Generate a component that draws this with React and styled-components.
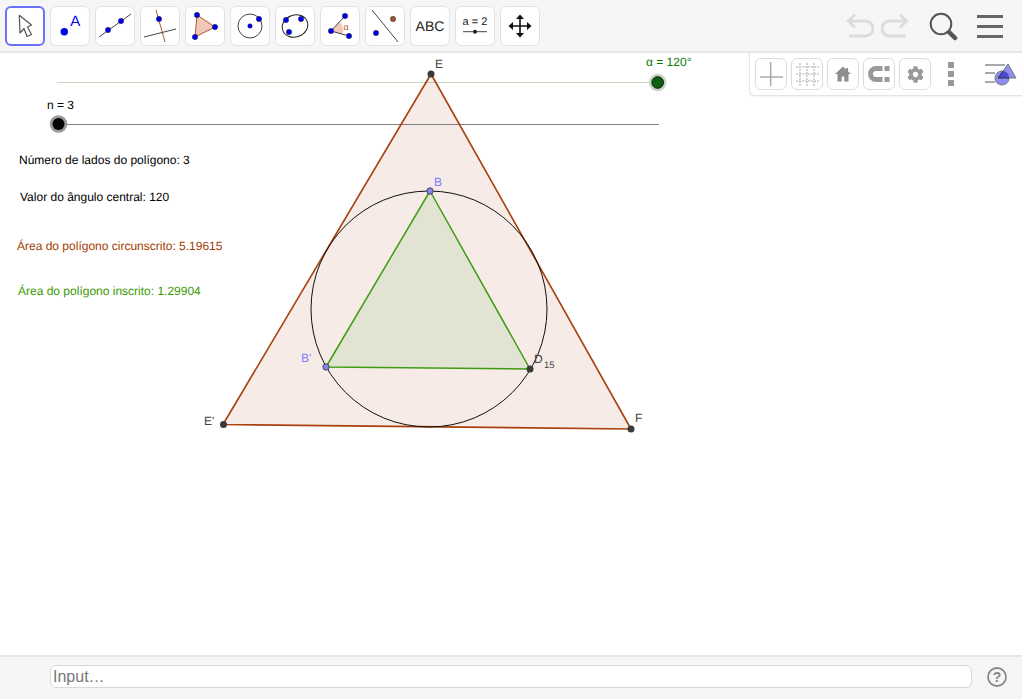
import React from "react";
import styled, { createGlobalStyle } from "styled-components";
import { FaCog } from "react-icons/fa";

const Global = createGlobalStyle`
  html, body { margin: 0; padding: 0; background: #fff; }
  body { font-family: "Liberation Sans", Arial, sans-serif; }
`;

const Page = styled.div`
  width: 1022px; height: 699px; display: flex; flex-direction: column; background: #fff;
`;
const Toolbar = styled.header`
  height: 53px; box-sizing: border-box; flex: none; background: #f6f6f6; border-bottom: 2px solid #e6e6e6;
  display: flex; align-items: flex-start; justify-content: space-between; padding: 6px 19px 0 5px;
`;
const Tools = styled.div`display: flex; gap: 5px;`;
const ToolButton = styled.div`
  width: 40px; height: 40px; box-sizing: border-box; background: #fff; border-radius: 6px;
  border: ${p => (p.$active ? "2px solid #6d71f5" : "1px solid #e2e2e2")};
  display: flex; align-items: center; justify-content: center;
  svg { display: block; flex: none; }
`;
const Actions = styled.div`display: flex; align-items: center; gap: 8px; height: 40px;`;
const UndoIcon = styled.svg`margin-right: ${p => p.$gap}px; flex: none;`;
const Canvas = styled.main`position: relative; flex: 1; min-height: 0; background: #fff;`;
const Drawing = styled.svg`display: block; position: absolute; left: 0; top: -53px;`;
const Label = styled.text`
  font-family: "Liberation Sans", Arial, sans-serif;
  font-size: ${p => p.$size || 12}px;
  text-rendering: geometricPrecision;
  fill: ${p => p.$color || "#000"};
`;
const StylePanel = styled.div`
  position: absolute; top: 0; right: 0; width: 273px; height: 43px; box-sizing: border-box;
  background: #fff; border-left: 1px solid #e4e4e4; border-bottom: 1px solid #e4e4e4;
  border-bottom-left-radius: 6px; box-shadow: 0 1px 2px rgba(0,0,0,.06);
  display: flex; align-items: flex-start; padding: 5px 0 0 5px;
`;
const StyleButtons = styled.div`display: flex; gap: 4px;`;
const StyleButton = styled.div`
  width: 32px; height: 32px; box-sizing: border-box; border: 1px solid #dcdcdc; border-radius: 6px; background: #fff;
  display: flex; align-items: center; justify-content: center; color: #999;
`;
const Dots = styled.div`
  width: 6px; margin: 4px 0 0 17px; display: flex; flex-direction: column; gap: 3px;
  span { display: block; height: 6px; background: #999; }
`;
const StyleToggle = styled.svg`margin: 2px 0 0 31px; display: block; flex: none;`;
const InputBar = styled.footer`
  height: 44px; flex: none; box-sizing: border-box; background: #f6f6f6; border-top: 2px solid #e6e6e6;
  display: flex; align-items: flex-start; padding: 8px 15px 0 50px; gap: 15px;
`;
const InputBox = styled.div`
  flex: 1; height: 23px; box-sizing: border-box; background: #fff; border: 1px solid #d8d8d8; border-radius: 6px;
  font-size: 16px; line-height: 21px; color: #777; padding-left: 2px;
`;
const Help = styled.svg`display: block; margin-top: 2px; flex: none;`;

const BLUE = "#0000e6";
const Dot = ({ x, y, r = 2.7, fill = BLUE }) => <circle cx={x} cy={y} r={r} fill={fill} stroke="#222" strokeWidth=".4" />;
const Icon = ({ children }) => <svg width="40" height="40" viewBox="0 0 40 40" fill="none" style={{ margin: -1 }}>{children}</svg>;

const toolIcons = [
  <Icon key="0"><path d="M14.3 9.3 15 27l4-4.5 3 8 4.5-2-4-7.5 4-2z" fill="#fff" stroke="#555" strokeWidth="1.2" strokeLinejoin="round" /></Icon>,
  <Icon key="1"><circle cx="14.3" cy="25.7" r="3.7" fill={BLUE} /><Label x="20.3" y="19.5" $size={15} $color={BLUE}>A</Label></Icon>,
  <Icon key="2"><path d="M4 31 36 8" stroke="#444" strokeWidth="1" /><Dot x={13} y={24} /><Dot x={26} y={15} /></Icon>,
  <Icon key="3"><path d="M16 4l9 32" stroke="#b5562a" strokeWidth="1" /><path d="M4 31l32-8" stroke="#444" strokeWidth="1" /><Dot x={19} y={13} /></Icon>,
  <Icon key="4"><path d="M12 9 30 21 10 31z" fill="#f2c9b9" stroke="#b5562a" strokeWidth="1" /><Dot x={12} y={9} /><Dot x={30} y={21} /><Dot x={10} y={31} /></Icon>,
  <Icon key="5"><circle cx="20" cy="20" r="12" stroke="#444" strokeWidth="1" /><Dot x={20} y={20} r={2.3} /><Dot x={29} y={13} /></Icon>,
  <Icon key="6"><ellipse cx="20" cy="20" rx="13" ry="11" stroke="#222" strokeWidth="1" transform="rotate(-20 20 20)" /><Dot x={11} y={14} /><Dot x={26} y={13} /><Dot x={14} y={26} /></Icon>,
  <Icon key="7"><path d="M11 25 19.5 15.5A13 13 0 0 1 22.5 28.2z" fill="#f2c9b9" /><path d="M25 10 11 25 29 30" stroke="#444" strokeWidth="1" /><Dot x={11} y={25} /><Dot x={25} y={10} /><Dot x={29} y={30} /><Label x="23.5" y="24" $size={9} $color="#b5562a">α</Label></Icon>,
  <Icon key="8"><path d="M7 4l26 32" stroke="#444" strokeWidth="1" /><Dot x={11} y={27} /><Dot x={28} y={13} fill="#a0522d" /></Icon>,
  <Icon key="9"><Label x="20" y="25" $size={14} $color="#222" textAnchor="middle">ABC</Label></Icon>,
  <Icon key="10"><Label x="20" y="19" $size={11} $color="#222" textAnchor="middle">a = 2</Label><path d="M8 25.7h24" stroke="#444" strokeWidth="1" /><circle cx="20" cy="25.7" r="2" fill="#222" /></Icon>,
  <Icon key="11"><path d="M20 11v18M11 20h18" stroke="#111" strokeWidth="1.6" /><path d="M20 8.5l-4 4.5h8zM20 31.5 16 27h8zM8.5 20l4.5-4v8zM31.5 20 27 16v8z" fill="#111" /></Icon>,
];

export default function App() {
  return (
    <Page>
      <Global />
      <Toolbar>
        <Tools>
          {toolIcons.map((ic, i) => <ToolButton key={i} $active={i === 0}>{ic}</ToolButton>)}
        </Tools>
        <Actions>
          <UndoIcon $gap={-1} width="28" height="26" viewBox="0 0 28 26" fill="none" stroke="#dcdcdc" strokeWidth="3">
            <path d="M4 8h15.5a7.5 7.5 0 0 1 0 15H3" /><path d="M9 1.5 2.5 8 9 14.5" />
          </UndoIcon>
          <UndoIcon $gap={11.5} width="28" height="26" viewBox="0 0 28 26" fill="none" stroke="#dcdcdc" strokeWidth="3">
            <path d="M24 8H8.5a7.5 7.5 0 0 0 0 15H25" /><path d="M19 1.5 25.5 8 19 14.5" />
          </UndoIcon>
          <UndoIcon $gap={10.5} width="30" height="30" viewBox="0 0 30 30" fill="none">
            <circle cx="12" cy="13" r="10.3" stroke="#555" strokeWidth="2" />
            <path d="M20.5 21.5l5.5 5.5" stroke="#555" strokeWidth="4.5" strokeLinecap="round" />
          </UndoIcon>
          <svg width="26" height="24" viewBox="0 0 26 24" fill="#666"><rect y="1" width="26" height="3" /><rect y="11" width="26" height="3" /><rect y="21" width="26" height="3" /></svg>
        </Actions>
      </Toolbar>
      <Canvas>
        <Drawing width="1024" height="700" viewBox="0 0 1024 700" fill="none">
          <path d="M57 82.5H657" stroke="#c6d8c0" strokeWidth="1" />
          <path d="M431 74 631 429 223 424.5Z" fill="#a33d0e" fillOpacity=".1" />
          <path d="M58 124.5H659" stroke="#808080" strokeWidth="1" />
          <path d="M430 191 530 369 326 367Z" fill="#e2e4d3" />
          <path d="M431 74 631 429 223 424.5Z" stroke="#a8400f" strokeWidth="1.6" strokeLinejoin="round" />
          <circle cx="429" cy="309" r="118" stroke="#111" strokeWidth="1" />
          <path d="M430 191 530 369 326 367Z" stroke="#3f9c12" strokeWidth="1.5" strokeLinejoin="round" />

          <circle cx="58.5" cy="124" r="8.7" fill="#999" />
          <circle cx="58.5" cy="124" r="6" fill="#050505" />
          <circle cx="657.7" cy="82.5" r="8.7" fill="#c5d6c2" />
          <circle cx="657.7" cy="82.5" r="5.8" fill="#0b610b" stroke="#111" strokeWidth="1" />

          <circle cx="431" cy="74" r="3.5" fill="#3a3a3a" />
          <circle cx="223.5" cy="424.5" r="3.5" fill="#3a3a3a" />
          <circle cx="631" cy="429" r="3.5" fill="#3a3a3a" />
          <circle cx="530" cy="369" r="3.5" fill="#3a3a3a" />
          <circle cx="430" cy="191" r="3.2" fill="#8585f0" stroke="#333" strokeWidth=".8" />
          <circle cx="326" cy="367" r="3.2" fill="#8585f0" stroke="#333" strokeWidth=".8" />

          <Label x="435" y="68" $color="#444">E</Label>
          <Label x="434" y="186" $color="#8080ff">B</Label>
          <Label x="301" y="362" $color="#8080ff">B'</Label>
          <Label x="204" y="425" $color="#444">E'</Label>
          <Label x="635" y="422" $color="#444">F</Label>
          <Label x="534" y="363" $color="#444">D</Label>
          <Label x="544" y="368" $size={9.5} $color="#444">15</Label>
          <Label x="646" y="66" $color="#0a7a00">α = 120°</Label>
          <Label x="47" y="109">n = 3</Label>
          <Label x="19" y="164">Número de lados do polígono: 3</Label>
          <Label x="20" y="201">Valor do ângulo central: 120</Label>
          <Label x="17" y="250" $color="#a33c00">Área do polígono circunscrito: 5.19615</Label>
          <Label x="18" y="295" $color="#3a9a00">Área do polígono inscrito: 1.29904</Label>
        </Drawing>
        <StylePanel>
          <StyleButtons>
            <StyleButton>
              <svg width="30" height="30" viewBox="0 0 30 30" fill="none" stroke="#aaa" strokeWidth="1.5"><path d="M14.7 3v24M4 18h23" /></svg>
            </StyleButton>
            <StyleButton>
              <svg width="30" height="30" viewBox="0 0 30 30" fill="none" stroke="#c8c8c8" strokeWidth="1.6" strokeDasharray="2 1"><path d="M8 4v23M15 4v23M22 4v23M4 8h23M4 15h23M4 22h23" /></svg>
            </StyleButton>
            <StyleButton>
              <svg width="18" height="18" viewBox="0 0 18 18" fill="#8e8e8e"><path d="M9 1.5 1 9h2.5v7.5h4.2v-5h2.6v5h4.2V9H17l-3-2.8V3h-2v1.4z" /></svg>
            </StyleButton>
            <StyleButton>
              <svg width="24" height="20" viewBox="0 0 24 20" fill="none"><path d="M15.5 4.5H9a5.5 5.5 0 0 0 0 11h6.5" stroke="#999" strokeWidth="5" /><path d="M17.5 2h5v5h-5zM17.5 13h5v5h-5z" fill="#999" /></svg>
            </StyleButton>
            <StyleButton><FaCog size={17} /></StyleButton>
          </StyleButtons>
          <Dots><span /><span /><span /></Dots>
          <StyleToggle width="32" height="26" viewBox="0 0 32 26" fill="none">
            <defs><clipPath id="toggleCircle"><circle cx="17" cy="18" r="7" /></clipPath></defs>
            <path d="M0 5h20M0 13h10M0 22h10" stroke="#aaa" strokeWidth="2" />
            <path d="M23 4 31 18H13z" fill="#8d8df5" stroke="#777" strokeWidth="1" />
            <circle cx="17" cy="18" r="7" fill="#8d8df5" stroke="#777" strokeWidth="1" />
            <path d="M23 4 31 18H13z" fill="#4a4ad8" stroke="#333" strokeWidth="1" clipPath="url(#toggleCircle)" />
          </StyleToggle>
        </StylePanel>
      </Canvas>
      <InputBar>
        <InputBox>Input…</InputBox>
        <Help width="20" height="20" viewBox="0 0 20 20" fill="none">
          <circle cx="10" cy="10" r="9" stroke="#888" strokeWidth="1.8" />
          <text x="10" y="15" textAnchor="middle" fontFamily="Liberation Sans" fontWeight="700" fontSize="14" fill="#888">?</text>
        </Help>
      </InputBar>
    </Page>
  );
}
